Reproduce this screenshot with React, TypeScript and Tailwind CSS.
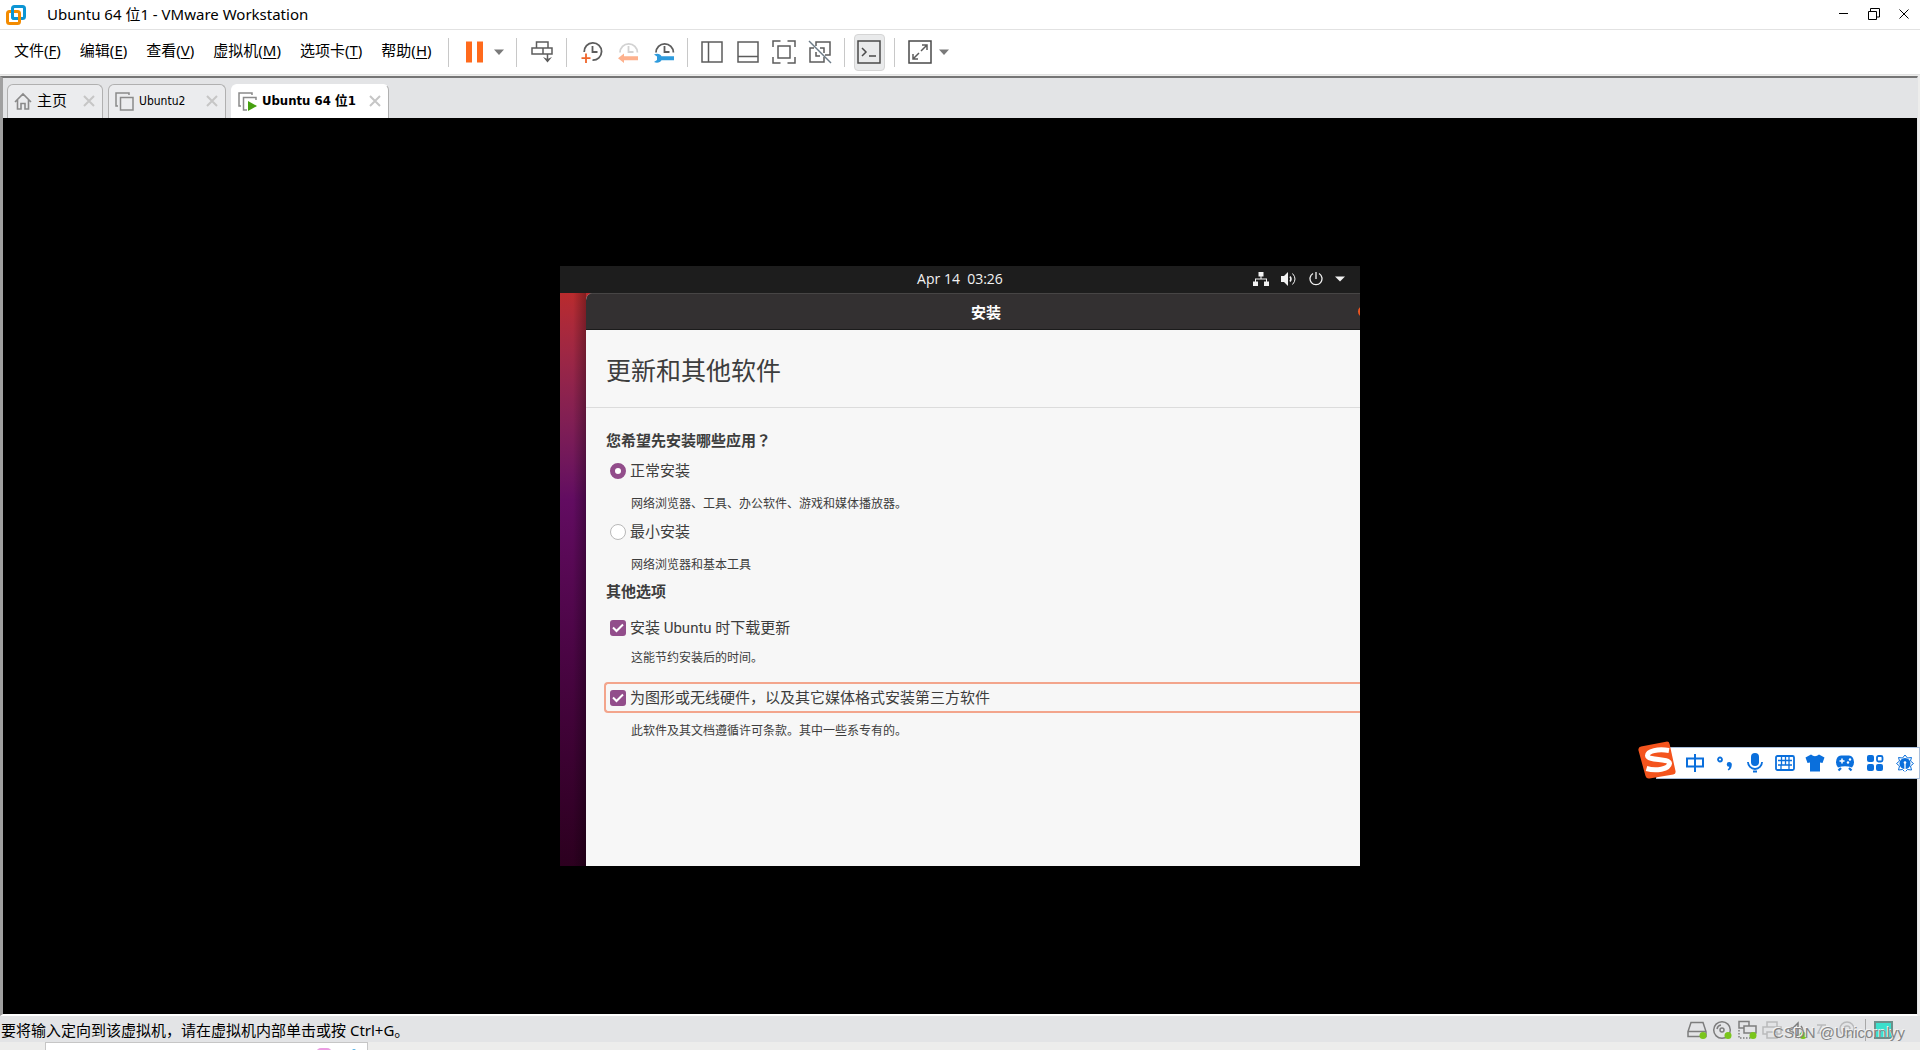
import type { ReactNode } from "react";

const menus = [
  { label: "文件", key: "F" },
  { label: "编辑", key: "E" },
  { label: "查看", key: "V" },
  { label: "虚拟机", key: "M" },
  { label: "选项卡", key: "T" },
  { label: "帮助", key: "H" },
];

function VmwareLogo() {
  return (
    <svg width="20" height="20" viewBox="0 0 20 20" fill="none" strokeWidth="3">
      <rect x="6.5" y="1.5" width="12" height="12" rx="2" stroke="#0c95d4" />
      <rect x="1.5" y="6.5" width="12" height="12" rx="2" stroke="#f38b00" />
      <path d="M6.5 5v6.5a2 2 0 0 0 2 2h1.500" stroke="#0c95d4" />
    </svg>
  );
}

function TitleBar() {
  return (
    <header className="flex h-[29px] items-center bg-white pr-[10px] pl-[6px]">
      <VmwareLogo />
      <h1 className="ml-[21px] flex-1 pb-[2px] text-[15px] leading-5 text-black">Ubuntu 64 位1 - VMware Workstation</h1>
      <div className="flex gap-[18px] pb-[2px]">
        <button aria-label="最小化">
          <svg width="12" height="12" viewBox="0 0 12 12"><path d="M1 5.5h9" stroke="#000" /></svg>
        </button>
        <button aria-label="还原">
          <svg width="12" height="12" viewBox="0 0 12 12" fill="none" stroke="#000">
            <path d="M.5 3.5h8v8h-8zM2.500 3V.5h9v8.500H9" />
          </svg>
        </button>
        <button aria-label="关闭">
          <svg width="12" height="12" viewBox="0 0 12 12"><path d="M1.500 1.500l9 9M10.500 1.500l-9 9" stroke="#000" /></svg>
        </button>
      </div>
    </header>
  );
}

function Separator() {
  return <span className="h-[29px] w-px bg-[#c8c8c8]" />;
}

function Caret() {
  return (
    <svg width="10" height="6" viewBox="0 0 10 6"><path d="M0 .5h10L5 6z" fill="#7a7a7a" /></svg>
  );
}

function Icon({ label, children }: { label: string; children: ReactNode }) {
  return (
    <button aria-label={label}>
      <svg width="24" height="24" viewBox="0 0 24 24" fill="none" stroke="#5c5c5c" strokeWidth="1.500">
        {children}
      </svg>
    </button>
  );
}

function Toolbar() {
  return (
    <div className="flex h-[46px] items-center border-y border-[#e2e2e2] bg-white pl-[14px]">
      <nav className="flex gap-[19px] pb-[5px] text-[15px] leading-5 text-black">
        {menus.map((m) => (
          <button key={m.key} className="whitespace-nowrap">
            {m.label}(<u className="underline-offset-2">{m.key}</u>)
          </button>
        ))}
      </nav>
      <div className="ml-[16px] flex items-center">
        <Separator />
        <div className="ml-[14px] flex items-center gap-[7px]">
          <Icon label="挂起">
            <path d="M3 1.500h6v21H3zM14 1.500h6v21h-6z" fill="#ff6a1c" stroke="none" />
          </Icon>
          <button aria-label="电源选项"><Caret /></button>
        </div>
        <span className="w-[12px]" />
        <Separator />
        <div className="mr-[12px] ml-[13px] flex">
          <Icon label="发送 Ctrl+Alt+Del">
            <path d="M6.500 2h11.500v6H6.500zM2 8h20v6H2zM13 8v6M17.500 14v6" />
            <path d="M13 17l4.500 5.500L22 17l-4.500 2z" fill="#5c5c5c" stroke="none" />
          </Icon>
        </div>
        <Separator />
        <div className="mr-[10px] ml-[14px] flex gap-[12px]">
          <Icon label="拍摄快照">
            <path d="M3.200 12A8.700 8.700 0 1 1 11.500 20.200M11.500 6v6h5" strokeWidth="1.800" />
            <path d="M5 13.500v9.500M.5 18.200h9" stroke="#f0652a" strokeWidth="1.800" />
          </Icon>
          <Icon label="恢复快照">
            <path d="M3 12.500a8.700 8.700 0 0 1 17.400 0M11.500 6v6h5" stroke="#d2d2d2" strokeWidth="1.800" />
            <path d="M1 18.200l6-4.700v2.700h14v4H7v2.700z" fill="#fdb18d" stroke="none" />
          </Icon>
          <Icon label="管理快照">
            <path d="M3 12.500a8.700 8.700 0 0 1 17.400 0M11.500 6v6h5" strokeWidth="1.800" />
            <path d="M1 14.500c3.500-1.500 6.500-.5 7.500 1.700H21v4H8.500C7.500 22.500 4 23.500 1 22l3-2v-3.500z" fill="#2e9bdd" stroke="none" />
          </Icon>
        </div>
        <Separator />
        <div className="mx-[12px] flex gap-[12px]">
          <Icon label="显示库"><path d="M2 2h20v20H2zM8.500 2v20" /></Icon>
          <Icon label="显示缩略图"><path d="M2 2h20v20H2zM2 16.500h20" /></Icon>
          <Icon label="全屏">
            <path d="M8.500 1H1v6M15.500 1H23v6M8.500 23H1v-6M15.500 23H23v-6M6 6h12v12H6z" />
          </Icon>
          <Icon label="Unity">
            <path d="M8 6V2h14v13h-5M6 8H2v14h14v-5M12 8h4v5M8 12v4h4" />
            <path d="M1 1l22 22" stroke="#6b7a86" />
          </Icon>
        </div>
        <Separator />
        <div className="mx-[9px] flex h-[37px] w-[31px] items-center justify-center rounded-[4px] border border-[#d5d5d5] bg-[#e9eaeb]">
          <Icon label="控制台视图"><path d="M1 1h22v22H1zM5 8l4 4-4 4M12 16h7" stroke="#4a4a4a" /></Icon>
        </div>
        <Separator />
        <div className="ml-[13px] flex items-center gap-[7px]">
          <Icon label="自由拉伸">
            <path d="M1 1h22v22H1z" stroke="#4a4a4a" />
            <path d="M13 11l6-6M14 5h5v5M11 13l-6 6M5 14v5h5" />
          </Icon>
          <button aria-label="拉伸选项"><Caret /></button>
        </div>
      </div>
    </div>
  );
}

function CloseTab({ name }: { name: string }) {
  return (
    <button aria-label={`关闭 ${name}`}>
      <svg width="12" height="12" viewBox="0 0 12 12"><path d="M1 1l10 10M11 1L1 11" stroke="#c6c6c6" strokeWidth="2" /></svg>
    </button>
  );
}

function Tab({ name, icon, look }: { name: string; icon: ReactNode; look: string }) {
  return (
    <div className={`flex h-[34px] items-center justify-between rounded-t-[6px] border border-b-0 pr-[7px] pb-px pl-[6px] ${look}`}>
      <button className="flex items-center gap-[5px] leading-5 whitespace-nowrap text-black">
        {icon}
        {name}
      </button>
      <CloseTab name={name} />
    </div>
  );
}

function TabBar() {
  return (
    <div className="flex h-[40px] items-end gap-[5px] bg-[#e3e4e6] pl-[4px] font-['DejaVu_Sans_Condensed','Noto_Sans_CJK_SC',sans-serif]">
      <Tab
        name="主页"
        look="w-[96px] border-[#b0b0b0] bg-[#ebecee] text-[15px]"
        icon={
          <svg width="18" height="18" viewBox="0 0 18 18" fill="none" stroke="#8a8a8a" strokeWidth="1.600">
            <path d="M1 10l8-8 8 8M3.500 8v9h3.500v-5.500h4V17h3.500V8" />
          </svg>
        }
      />
      <Tab
        name="Ubuntu2"
        look="w-[118px] border-[#b0b0b0] bg-[#ebecee] text-[12px]"
        icon={
          <svg width="19" height="19" viewBox="0 0 19 19" fill="none" stroke="#8a8a8a" strokeWidth="1.500">
            <path d="M5.500 5.500h12.500v12.500H5.500zM3 14H1V1h13v2" />
          </svg>
        }
      />
      <Tab
        name="Ubuntu 64 位1"
        look="w-[158px] border-white border-r-[#b0b0b0] bg-white text-[13px] font-bold"
        icon={
          <svg width="19" height="19" viewBox="0 0 19 19" fill="none" stroke="#8a8a8a" strokeWidth="1.500">
            <path d="M18 8V5.500H5.500v12.500H9M3 14H1V1h13v2" />
            <path d="M10 9l9 5-9 5z" fill="#46a010" stroke="none" />
          </svg>
        }
      />
    </div>
  );
}

const radioStyle =
  "size-4 shrink-0 appearance-none rounded-full border border-[#b8b8b8] bg-white checked:border-[5px] checked:border-[#924d8b]";

function Check({ id }: { id: string }) {
  return (
    <span className="grid size-4 shrink-0">
      <input id={id} type="checkbox" defaultChecked className="col-start-1 row-start-1 size-4 appearance-none rounded-[3px] bg-[#924d8b]" />
      <svg className="pointer-events-none col-start-1 row-start-1" width="16" height="16" viewBox="0 0 16 16" fill="none" stroke="#fff" strokeWidth="2">
        <path d="M3 7.500l3.500 3.500L13 4.500" />
      </svg>
    </span>
  );
}

function Installer() {
  return (
    <section className="flex h-[600px] w-[800px] flex-col overflow-hidden bg-[#1d1d1d] text-[#3d3d3d]">
      <div className="grid h-[27px] shrink-0 grid-cols-3 items-center pb-[2px] font-['Open_Sans',sans-serif] text-[14px] leading-5 text-[#f2f2f2]">
        <time className="col-start-2 text-center whitespace-pre">Apr 14  03:26</time>
        <div className="flex items-center justify-end gap-[12px] pr-[15px]">
          <svg width="16" height="14" viewBox="0 0 16 14" fill="#f2f2f2">
            <path d="M5.500 0h5v4.500h-2V6.500h5.500V9.500h2V14h-5V9.500h2V7.500H3V9.500h2V14H0V9.500h2V6.500h5.500V4.500h-2z" />
          </svg>
          <svg width="16" height="14" viewBox="0 0 16 14" fill="none" stroke="#f2f2f2">
            <path d="M0 4h3l4-4v14l-4-4H0z" fill="#f2f2f2" stroke="none" />
            <path d="M9 4.500q2 2.500 0 5" strokeWidth="1.500" />
            <path d="M11.500 1.500q5 5.500 0 11" />
          </svg>
          <svg width="14" height="14" viewBox="0 0 14 14" fill="none" stroke="#f2f2f2" strokeWidth="1.300">
            <path d="M4 1.500a6 6 0 1 0 6 0M7 0v7" />
          </svg>
          <svg width="10" height="6" viewBox="0 0 10 6"><path d="M0 .5h10L5 5.500z" fill="#f2f2f2" /></svg>
        </div>
      </div>
      <div className="flex flex-1 bg-linear-to-b from-[#b92b2d] via-[#620c61] via-36% to-[#2c001f]">
        <div className="w-[26px] shrink-0 bg-linear-to-r from-transparent from-50% to-black/30" />
        <div className="flex min-w-0 flex-1 flex-col overflow-hidden rounded-tl-[7px] bg-[#f7f7f7]">
          <div className="relative flex h-[37px] items-center border-t border-b border-t-[#474545] border-b-[#1b1b1b] bg-[#333031] pl-[26px]">
            <h2 className="flex-1 text-center text-[15px] leading-5 font-bold text-white">安装</h2>
            <span className="absolute top-[12px] -right-[9px] size-[11px] rounded-full bg-[#e95420]" />
          </div>
          <h3 className="border-b border-[#dcdcdc] pt-[22px] pb-[18px] pl-[20px] text-[25px] leading-[37px]">更新和其他软件</h3>
          <form className="pl-[20px] font-[Roboto,'Noto_Sans_CJK_SC',sans-serif] text-[15px] leading-5">
            <fieldset>
              <legend className="pt-[22px] font-bold">
                您希望先安装哪些应用<span className="font-['Noto_Sans_CJK_TC',sans-serif]" lang="zh-TW">？</span>
              </legend>
              <div className="mt-[10px] flex items-center gap-[4px] pl-[4px]">
                <input id="normal" type="radio" name="mode" defaultChecked className={radioStyle} />
                <label htmlFor="normal">正常安装</label>
              </div>
              <p className="mt-[13px] pl-[25px] text-[12px]">网络浏览器、工具、办公软件、游戏和媒体播放器。</p>
              <div className="mt-[8px] flex items-center gap-[4px] pl-[4px]">
                <input id="minimal" type="radio" name="mode" className={radioStyle} />
                <label htmlFor="minimal">最小安装</label>
              </div>
              <p className="mt-[13px] pl-[25px] text-[12px]">网络浏览器和基本工具</p>
            </fieldset>
            <fieldset>
              <legend className="pt-[7px] font-bold">其他选项</legend>
              <div className="mt-[16px] flex items-center gap-[4px] pl-[4px]">
                <Check id="updates" />
                <label htmlFor="updates">安装 Ubuntu 时下载更新</label>
              </div>
              <p className="mt-[10px] pl-[25px] text-[12px]">这能节约安装后的时间。</p>
              <div className="mt-[14px] -ml-[2px] flex h-[31px] items-center gap-[4px] rounded-l-[4px] border-2 border-r-0 border-[#f3a58c] pl-[4px]">
                <Check id="thirdparty" />
                <label htmlFor="thirdparty">为图形或无线硬件，以及其它媒体格式安装第三方软件</label>
              </div>
              <p className="mt-[8px] pl-[25px] text-[12px]">此软件及其文档遵循许可条款。其中一些系专有的。</p>
            </fieldset>
          </form>
        </div>
      </div>
    </section>
  );
}

const imeIcons: { label: string; art: ReactNode }[] = [
  {
    label: "中文",
    art: <path d="M2 5.500h16v8H2zM10 1v18" fill="none" stroke="#0a6fdc" strokeWidth="2" />,
  },
  {
    label: "标点",
    art: (
      <>
        <circle cx="5" cy="6.500" r="2" fill="none" stroke="#0a6fdc" strokeWidth="1.800" />
        <path d="M14 9a2.500 2.500 0 0 1 2.800 2.800q0 4-3.300 5.700l-.8-1.200q1.500-1 1.600-2.500a2.400 2.400 0 0 1-.3-4.800z" />
      </>
    ),
  },
  {
    label: "语音",
    art: (
      <>
        <rect x="6" y="0" width="8" height="13" rx="4" />
        <path d="M3 9a7 7 0 0 0 14 0" fill="none" stroke="#0a6fdc" strokeWidth="1.800" />
        <path d="M8 17.500h4v2H8z" />
      </>
    ),
  },
  {
    label: "键盘",
    art: (
      <>
        <rect x="1" y="3" width="18" height="14" rx="1.500" fill="none" stroke="#0a6fdc" strokeWidth="1.800" />
        <path d="M3 7.500h14M3 12h14M6.500 4v8M10.500 4v8M14 4v8M6 12v4M14 12v4" stroke="#0a6fdc" strokeWidth="1.300" />
      </>
    ),
  },
  { label: "皮肤", art: <path d="M6 1.500q4 3.500 8 0l5.500 3-2 5.500-2.500-.5V18.500H5V9.500L2.500 10l-2-5.500z" /> },
  {
    label: "游戏",
    art: (
      <>
        <path d="M6 2.500h8q4.500 0 5 6.500 0 4-2 5.500-7-2.500-14 0-2-1.500-2-5.500.5-6.500 5-6.500z" />
        <path d="M3.500 17.500L6 15M16.500 17.500L14 15" stroke="#0a6fdc" strokeWidth="2.200" />
        <path d="M4.500 8h5M7 5.500v5" stroke="#fff" strokeWidth="1.500" />
        <circle cx="13" cy="9.500" r="1.200" fill="#fff" />
        <circle cx="15" cy="6.500" r="1.200" fill="#fff" />
      </>
    ),
  },
  {
    label: "工具箱",
    art: (
      <>
        <rect x="2" y="2" width="7" height="7" rx="2" />
        <rect x="2" y="11" width="7" height="7" rx="2" />
        <rect x="11" y="11" width="7" height="7" rx="2" />
        <rect x="12" y="3" width="5.500" height="5.500" rx="1.500" fill="none" stroke="#0a6fdc" strokeWidth="1.800" />
      </>
    ),
  },
  {
    label: "设置",
    art: (
      <>
        <circle cx="10" cy="10.500" r="5.500" />
        <path d="M10 2l2.500 3 4-.5-1 3.500 3 2.500-3 2.500 1 4-4-.5L10 19l-2.500-2.500-4 .5 1-4-3-2.500 3-2.500-1-3.500 4 .5z" fill="none" stroke="#0a6fdc" />
        <path d="M10 10v9" stroke="#fff" strokeWidth="1.300" />
        <circle cx="10" cy="9.500" r="1.300" fill="#fff" />
      </>
    ),
  },
];

function ImeBar() {
  return (
    <div className="absolute top-[741px] right-0 flex items-end">
      <svg className="z-10 -mr-[20px]" width="38" height="38" viewBox="0 0 38 38">
        <path d="M3 5.500L28 .7q3-.7 3.600 2.300L37.500 30q.6 3-2.300 3.500L11.500 37.500q-3 .5-4-2.500L.5 9.500q-.7-3.300 2.500-4z" fill="#f4541d" />
        <path d="M31 9.500C20 7.500 9.500 10 9.500 14.500 10 20 31 17 31.500 22.500 31 28 18 30.500 8.500 27.500" fill="none" stroke="#fff" strokeWidth="5" />
      </svg>
      <div className="flex h-[32px] items-center gap-[10px] border border-[#a9bfdc] bg-white pr-[4px] pl-[28px]">
        {imeIcons.map((i) => (
          <button key={i.label} aria-label={i.label}>
            <svg width="20" height="20" viewBox="0 0 20 20" fill="#0a6fdc">{i.art}</svg>
          </button>
        ))}
      </div>
    </div>
  );
}

function StatusIcon({ label, on, faded, children }: { label: string; on?: boolean; faded?: boolean; children: ReactNode }) {
  return (
    <button aria-label={label}>
      <svg className={faded ? "opacity-40" : ""} width="20" height="20" viewBox="0 0 20 20" fill="none" stroke="#7d7d7d" strokeWidth="1.500">
        {children}
        {on && <circle cx="16" cy="15.500" r="3.500" fill="#7ac51c" stroke="none" />}
      </svg>
    </button>
  );
}

function StatusBar() {
  return (
    <footer className="relative flex h-[26px] items-center justify-between bg-[#e3e4e6] pt-[2px] pr-[27px] text-[15px] leading-5 text-black">
      <p className="pl-px">要将输入定向到该虚拟机，请在虚拟机内部单击或按 Ctrl+G。</p>
      <div className="flex items-center gap-[5px]">
        <StatusIcon label="硬盘" on><path d="M4 2.500h12l3 9v5H1v-5zM1 11.500h18" /></StatusIcon>
        <StatusIcon label="光驱" on><circle cx="10" cy="10" r="8.300" /><circle cx="10" cy="10" r="2" /><path d="M5 9a5 5 0 0 1 4-4" /></StatusIcon>
        <StatusIcon label="网络" on>
          <path d="M7 8H2V1.500h10v4M7 6h12v7H7z" />
          <path d="M2 10v8h12" strokeDasharray="1.500 1.500" />
        </StatusIcon>
        <StatusIcon label="打印机" faded><path d="M5 7V2h10v5M5 14H1V7h18v7h-4M5 12h10v6H5z" /></StatusIcon>
        <StatusIcon label="声卡" on><path d="M3 8h3l5-5v14l-5-5H3zM14 6q3 4 0 8" /></StatusIcon>
        <StatusIcon label="USB" faded><path d="M5 5h9M10 5l-4 8h10" /></StatusIcon>
        <StatusIcon label="摄像头" faded><circle cx="10" cy="9" r="7" /><circle cx="10" cy="9" r="3" /></StatusIcon>
        <span className="mx-[3px] h-[22px] w-px bg-[#a8a8a8]" />
        <button aria-label="消息" className="h-[18px] w-[19px] border-2 border-[#6d8f8b] bg-[#3be0cc]" />
      </div>
      <span className="absolute top-[7px] right-[15px] font-['Liberation_Sans',sans-serif] text-[15px] text-[#858585] [text-shadow:-1px_-1px_0_#f4f4f4]">CSDN @Unicornlyy</span>
    </footer>
  );
}

function Taskbar() {
  return (
    <div className="flex h-[8px] overflow-hidden bg-[#ededec] pl-[45px]">
      <div className="flex w-[323px] items-start justify-end gap-[20px] border border-b-0 border-[#c6c6c6] bg-white pr-[11px]">
        <span className="mt-[5px] h-[10px] w-[16px] rounded-full bg-[#eb9de2]" />
        <span className="mt-[6px] h-[4px] w-[4px] rounded-full bg-[#58b3e6]" />
      </div>
    </div>
  );
}

export default function App() {
  return (
    <div className="relative flex h-screen min-h-[780px] flex-col overflow-hidden bg-[#ededec] font-['Noto_Sans','Noto_Sans_CJK_SC',sans-serif]">
      <TitleBar />
      <Toolbar />
      <main className="mt-px mr-[2px] flex flex-1 flex-col border-t-2 border-r border-b-2 border-l-[3px] border-t-[#757575] border-r-[#e3e4e6] border-b-white border-l-[#a0a0a0]">
        <TabBar />
        <div className="flex flex-1 items-center justify-center bg-black">
          <Installer />
        </div>
      </main>
      <StatusBar />
      <Taskbar />
      <ImeBar />
    </div>
  );
}
